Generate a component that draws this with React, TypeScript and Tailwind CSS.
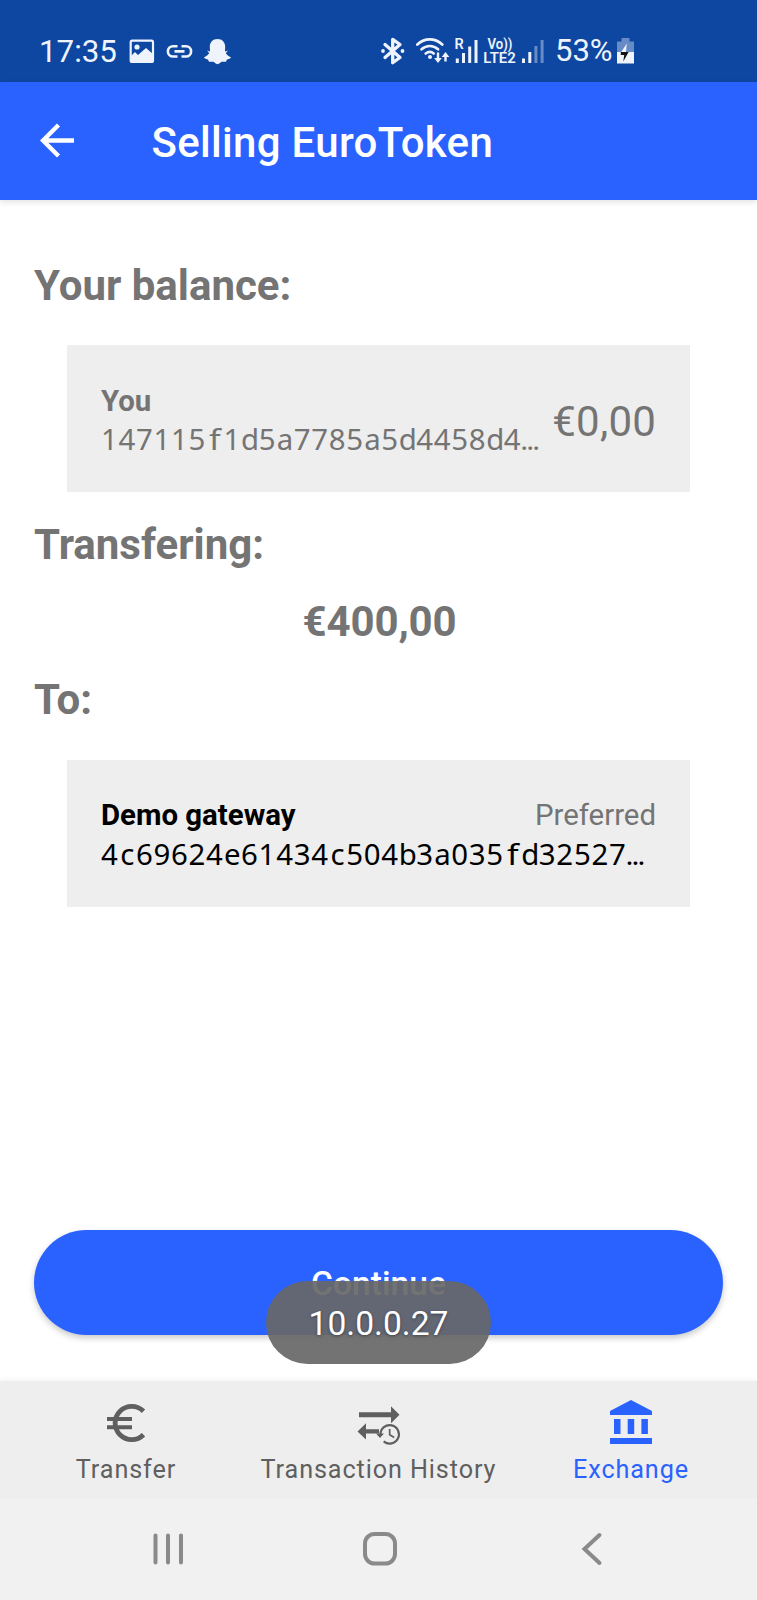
import type { ReactNode } from "react";

function glyphClass(part: string) {
  if (part === "…") return "inline-block w-[17.5px] text-center text-[21px] leading-[30px] font-bold tracking-normal";
  if (part === "f") return "inline-block w-[17.52px] scale-x-[1.15] text-center tracking-normal";
  return "inline-block w-[17.52px] text-center tracking-normal";
}

function MonoKey({ value }: { value: string }) {
  return (
    <span className="whitespace-nowrap font-['Noto_Sans',sans-serif] text-[29.4px] leading-[40px] tracking-[0.7px]">
      {value.split(/([a-f…])/).map((part, i) =>
        /^[a-f…]$/.test(part) ? (
          <span key={i} className={glyphClass(part)}>
            {part}
          </span>
        ) : (
          part
        ),
      )}
    </span>
  );
}

function StatusBar() {
  return (
    <header className="flex h-[82px] items-center bg-[#0d47a1] pt-[20px] pl-[39px] text-[#eef3fc]">
      <span className="w-[90px] pt-px text-[31.300px] leading-[36px]">17:35</span>
      <svg className="h-[30px] w-[26px]" viewBox="129 35 26 30">
        <rect x="130.7" y="39.7" width="22.3" height="21.3" rx="1.5" fill="none" stroke="currentColor" strokeWidth="2.2" />
        <circle cx="137" cy="46" r="2.6" fill="currentColor" />
        <path d="M131 55l4-4 3 3 8-7 7 6v8h-22z" fill="currentColor" />
      </svg>
      <svg className="ml-[11px] h-[30px] w-[28px]" viewBox="166 35 28 30">
        <path d="M177.500 45.300h-4.500a5.100 5.100 0 0 0 0 10.200h4.500M181.500 45.300h4.500a5.100 5.100 0 0 1 0 10.200h-4.500M174.500 50.400h10" fill="none" stroke="currentColor" strokeWidth="2.6" />
      </svg>
      <svg className="ml-[9px] h-[30px] w-[29px]" viewBox="203 35 29 30">
        <path d="M217.500 38c4.800 0 7.700 3.400 7.700 7.800 0 1.600-.2 3-.2 4.200 0 1.900 2.600 4.900 6 6.300-.4 1.600-2.700 1.900-4 2.200-.5.700-.5 1.900-1.100 2.200-1.200.4-2.900-.3-4.300.1-1.500.6-2.300 2.400-4.100 2.400s-2.600-1.800-4.100-2.400c-1.400-.4-3.100.3-4.300-.1-.6-.3-.6-1.500-1.100-2.200-1.300-.3-3.600-.6-4-2.200 3.400-1.400 6-4.400 6-6.300 0-1.200-.2-2.600-.2-4.200 0-4.400 2.900-7.800 7.700-7.800z" fill="currentColor" />
        <path d="M207 49.500l3.500 1.200v3zM228 49.500l-3.500 1.200v3z" fill="currentColor" />
      </svg>
      <svg className="ml-[148px] h-[30px] w-[26px]" viewBox="380 35 26 30">
        <path d="M385 43.500l15 13-7.300 5.200v-23.400l7.300 5.200-15 13" fill="none" stroke="currentColor" strokeWidth="3.300" strokeLinejoin="round" strokeLinecap="round" />
        <circle cx="383" cy="50" r="1.900" fill="currentColor" />
        <circle cx="402.500" cy="50" r="1.900" fill="currentColor" />
      </svg>
      <svg className="ml-[9px] h-[30px] w-[36px]" viewBox="415 35 36 30">
        <g fill="none" stroke="currentColor" strokeWidth="2.700" strokeLinecap="round">
          <path d="M417.300 43.500c7.500-6.800 17.500-6.800 25 0M421.500 48.300c5-4.400 11.600-4.400 16.600 0M425.700 52.500c2.700-2 5.600-2 8 0" />
        </g>
        <circle cx="430" cy="56" r="2" fill="currentColor" />
        <path d="M436.800 51.500h2.400v5.500h2.600l-3.800 5-3.800-5h2.600zM444.300 60.500h2.400v-4.500h2.600l-3.800-5-3.800 5h2.600z" fill="currentColor" />
      </svg>
      <svg className="ml-[3px] h-[30px] w-[26px]" viewBox="454 35 26 30">
        <text x="454.500" y="47.600" className="fill-current text-[14.500px] font-semibold">R</text>
        <path d="M455.800 57.500h3v4.500h-3zM462 52h3v10h-3zM468.200 45.500h3v16.500h-3zM474.500 39h3v23h-3z" fill="currentColor" />
      </svg>
      <svg className="ml-[3px] h-[30px] w-[35px]" viewBox="483 35 35 30">
        <text x="487.500" y="47.600" textLength="25" lengthAdjust="spacingAndGlyphs" className="fill-current text-[14px] font-semibold">Vo))</text>
        <text x="483.300" y="62" textLength="32.500" lengthAdjust="spacingAndGlyphs" className="fill-current text-[15px] font-semibold">LTE2</text>
      </svg>
      <svg className="ml-[3px] h-[30px] w-[24px]" viewBox="521 35 24 30">
        <path d="M522 57.500h3v4.500h-3zM528.300 51h3v11h-3z" fill="currentColor" />
        <path d="M534.400 45h3v17h-3zM540.600 39h3v23h-3z" fill="currentColor" opacity=".4" />
      </svg>
      <span className="ml-[10px] w-[60px] text-[31px] leading-[36px]">53%</span>
      <svg className="ml-[1px] h-[30px] w-[20px]" viewBox="616 35 20 30">
        <path d="M617 40.500h4.500v-3.500h8v3.500h4.500v10.500h-17z" fill="currentColor" opacity=".4" />
        <path d="M617 51h17v11.500h-17z" fill="currentColor" />
        <path d="M626.800 42.500l-6.200 9.500h7.400v-1h-2z" fill="currentColor" />
        <path d="M620.800 51h7.800l-5.300 9.500.9-6.500h-3.400z" fill="#111" />
      </svg>
    </header>
  );
}

function NavItem({ label, active, children }: { label: string; active?: boolean; children: ReactNode }) {
  return (
    <a className={active ? "flex w-[252px] flex-col items-center text-[#2962ff]" : "flex w-[252px] flex-col items-center text-[#5f5f5f]"}>
      <svg className="mt-[17px] h-[50px] w-[50px]" viewBox="0 0 50 50">
        {children}
      </svg>
      <span className="mt-[7px] text-[25.200px] leading-[30px] whitespace-nowrap tracking-[0.9px]">{label}</span>
    </a>
  );
}

export default function App() {
  return (
    <div className="relative flex h-[1600px] w-[757px] flex-col overflow-hidden bg-white font-[Roboto,sans-serif] text-[#747474]">
      <StatusBar />
      <div className="z-10 flex h-[118px] shrink-0 items-center bg-[#2962ff] pl-[40px] text-white shadow-[0_2px_6px_rgba(0,0,0,0.12)]">
        <svg className="h-[36px] w-[36px]" viewBox="0 0 36 36">
          <path d="M34 17.500H3M18.500 2L3 17.500 18.500 33" fill="none" stroke="currentColor" strokeWidth="4.400" />
        </svg>
        <h1 className="mt-[2px] ml-[75.500px] text-[42px] leading-[49px] font-medium tracking-[0.3px]">Selling EuroToken</h1>
      </div>

      <main className="flex flex-1 flex-col px-[34px] pt-[61px]">
        <h2 className="text-[42px] leading-[49px] font-bold">Your balance:</h2>
        <section className="mx-[33px] mt-[35px] flex h-[147px] items-center justify-between bg-[#eee] px-[34px]">
          <div className="flex flex-col pt-[5px]">
            <b className="text-[29.400px] leading-[35px]">You</b>
            <MonoKey value="147115f1d5a7785a5d4458d4…" />
          </div>
          <span className="mt-[5px] text-[42px] leading-[49px] tracking-[0.2px]">€0,00</span>
        </section>
        <h2 className="mt-[28px] text-[42px] leading-[49px] font-bold">Transfering:</h2>
        <p className="mt-[28px] pl-[2px] text-center text-[42px] leading-[49px] font-bold tracking-[-0.1px]">€400,00</p>
        <h2 className="mt-[29px] text-[42px] leading-[49px] font-bold">To:</h2>
        <section className="mx-[33px] mt-[36px] flex h-[147px] flex-col justify-center bg-[#eee] px-[34px] pt-[5px] text-black">
          <div className="flex h-[36px] justify-between text-[29.400px] leading-[34px]">
            <b>Demo gateway</b>
            <span className="text-[#747474]">Preferred</span>
          </div>
          <MonoKey value="4c69624e61434c504b3a035fd32527…" />
        </section>
        <button className="mt-auto mb-[46px] h-[105px] rounded-full bg-[#2962ff] pt-[2px] text-[33.600px] leading-[40px] font-medium text-white shadow-[0_3px_6px_rgba(0,0,0,0.22)]">
          Continue
        </button>
      </main>

      <nav className="flex h-[117px] shrink-0 justify-between bg-[#eee] shadow-[0_-1px_5px_rgba(0,0,0,0.06)]">
        <NavItem label="Transfer">
          <path d="M42.500 13.300A16.600 16.600 0 1 0 42.500 36.700" fill="none" stroke="currentColor" strokeWidth="4.800" />
          <path d="M6 21h25M6 29.300h25" stroke="currentColor" strokeWidth="4" />
        </NavItem>
        <NavItem label="Transaction History">
          <path d="M5 14.200h32v-6l8.500 8.500-8.500 8.500v-6H5z" fill="currentColor" />
          <path d="M25 31.200H12v-6L3.500 33.500 12 41.500v-6h13z" fill="currentColor" />
          <path d="M26.500 36.500a9.200 9.200 0 1 1 3.200 6.800" fill="none" stroke="currentColor" strokeWidth="2.200" />
          <path d="M22 35.500h8l-4 4.500zM34.800 31h1.700v5.300l4.200 2.500-.9 1.400-5-3z" fill="currentColor" />
        </NavItem>
        <NavItem label="Exchange" active>
          <path d="M4 13L25 2l21 11V17H4zM8 21h6.500v15H8zM21.700 21h6.500v15h-6.500zM35.400 21h6.500v15h-6.500zM4 40h42v6H4z" fill="currentColor" />
        </NavItem>
      </nav>

      <footer className="flex h-[102px] shrink-0 items-center justify-between bg-[#f1f1f1] pr-[145px] pl-[148px] text-[#8a8a8a]">
        <svg className="h-[40px] w-[40px]" viewBox="0 0 40 40">
          <path d="M7.500 6.500v27M20 6.500v27M33 6.500v27" stroke="currentColor" strokeWidth="4" strokeLinecap="round" />
        </svg>
        <svg className="h-[40px] w-[40px]" viewBox="0 0 40 40">
          <rect x="5" y="5" width="30" height="29.500" rx="9.500" fill="none" stroke="currentColor" strokeWidth="4" />
        </svg>
        <svg className="h-[40px] w-[40px]" viewBox="0 0 40 40">
          <path d="M27.500 6L12.500 20 27.500 34" fill="none" stroke="currentColor" strokeWidth="4" strokeLinecap="round" />
        </svg>
      </footer>

      <div className="absolute top-[1281px] left-[266px] z-20 flex h-[83px] w-[225px] items-center justify-center rounded-full bg-[#676767]/92 pt-[2px] text-[33.600px] leading-[40px] text-white [text-shadow:0_1px_3px_rgba(0,0,0,0.4)]">
        10.0.0.27
      </div>
    </div>
  );
}
